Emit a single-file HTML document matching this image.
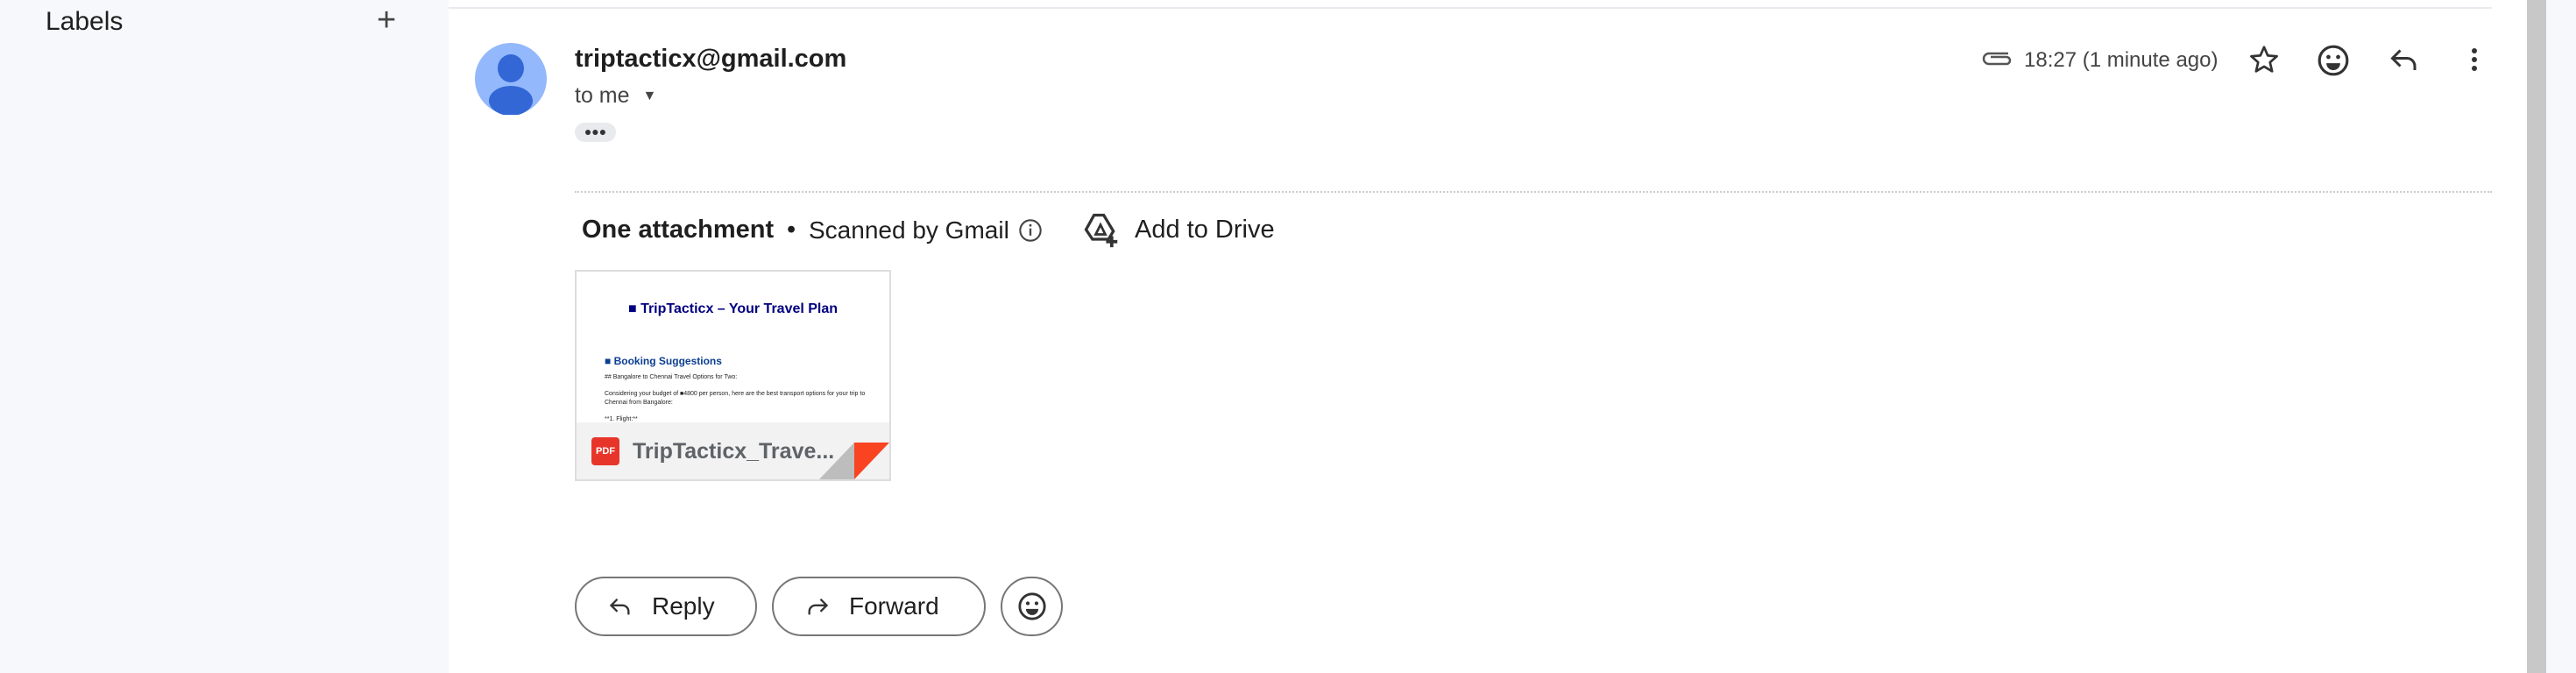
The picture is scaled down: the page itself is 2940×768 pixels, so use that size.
<!DOCTYPE html>
<html><head><meta charset="utf-8"><style>
*{margin:0;padding:0;box-sizing:border-box}
body{width:2940px;height:768px;overflow:hidden;background:#f6f8fc;font-family:"Liberation Sans",sans-serif;color:#1f1f1f;position:relative}
.abs{position:absolute}
.main{left:512px;top:0;width:2372px;height:768px;background:#fff}
.btn{position:absolute;top:658px;height:68px;border:2px solid #747775;border-radius:34px;display:flex;align-items:center;font-size:28px;color:#1f1f1f}
</style></head><body>
<div class="abs" style="left:52px;top:8px;font-size:30px;color:#1f1f1f">Labels</div>
<div class="abs" style="left:430px;top:2px;font-size:38px;color:#444">+</div>
<div class="abs main"></div>
<div class="abs" style="left:512px;top:8px;width:2332px;height:2px;background:#e8ebef"></div>
<div class="abs" style="left:2884px;top:0;width:22px;height:768px;background:#c8c8c8"></div>
<svg class="abs" style="left:542px;top:49px" width="82" height="82" viewBox="0 0 82 82"><circle cx="41" cy="41" r="41" fill="#93b8fb"/><ellipse cx="41" cy="29" rx="15" ry="16" fill="#3367d6"/><ellipse cx="41" cy="66" rx="25" ry="17" fill="#3367d6"/></svg>
<div class="abs" style="left:656px;top:51px;font-size:29px;font-weight:bold">triptacticx@gmail.com</div>
<div class="abs" style="left:656px;top:95px;font-size:25px;color:#444">to me <span style="font-size:16px;position:relative;top:-3px;margin-left:8px">▼</span></div>
<div class="abs" style="left:656px;top:140px;width:47px;height:22px;border-radius:11px;background:#e8eaed;font-size:14px;text-align:center;line-height:20px;color:#333;font-weight:bold">●●●</div>
<div class="abs" style="left:2262px;top:57px"><svg width="36" height="20" viewBox="0 0 36 20"><path d="M30 4H8a6 6 0 0 0 0 12h20a4 4 0 0 0 0-8H10" fill="none" stroke="#555" stroke-width="2.5"/></svg></div>
<div class="abs" style="left:2310px;top:55px;font-size:24px;color:#444">18:27 (1 minute ago)</div>
<svg class="abs" style="left:2566px;top:50px" width="36" height="36" viewBox="0 0 24 24"><path d="M12 2.5l2.8 6.4 6.9.6-5.2 4.6 1.6 6.8L12 17.3l-6.1 3.6 1.6-6.8-5.2-4.6 6.9-.6z" fill="none" stroke="#333" stroke-width="1.8" stroke-linejoin="round"/></svg>
<svg class="abs" style="left:2644px;top:50px" width="38" height="38" viewBox="0 0 24 24"><circle cx="12" cy="12" r="10" fill="none" stroke="#333" stroke-width="2"/><circle cx="8.5" cy="9.5" r="1.5" fill="#333"/><circle cx="15.5" cy="9.5" r="1.5" fill="#333"/><path d="M7 14h10a5 5 0 0 1-10 0z" fill="#333"/></svg>
<svg class="abs" style="left:2726px;top:50px" width="36" height="36" viewBox="0 0 24 24"><path d="M9 5L3 11l6 6M3 11h11a6 6 0 0 1 6 6v3" fill="none" stroke="#333" stroke-width="2"/></svg>
<svg class="abs" style="left:2812px;top:50px" width="24" height="36" viewBox="0 0 24 36"><circle cx="12" cy="8" r="3" fill="#333"/><circle cx="12" cy="18" r="3" fill="#333"/><circle cx="12" cy="28" r="3" fill="#333"/></svg>
<div class="abs" style="left:656px;top:218px;width:2188px;border-top:2px dotted #ccc"></div>
<div class="abs" style="left:664px;top:246px;font-size:29px;font-weight:bold">One attachment</div>
<div class="abs" style="left:898px;top:246px;font-size:29px">•</div>
<div class="abs" style="left:923px;top:247px;font-size:28px">Scanned by Gmail</div>
<svg class="abs" style="left:1162px;top:249px" width="28" height="28" viewBox="0 0 24 24"><circle cx="12" cy="12" r="10" fill="none" stroke="#444" stroke-width="1.8"/><path d="M12 10v7" stroke="#444" stroke-width="2"/><circle cx="12" cy="7" r="1.2" fill="#444"/></svg>
<svg class="abs" style="left:1234px;top:240px" width="44" height="44" viewBox="0 0 24 24"><path d="M8 3h6l6 10-3 5H7l-4-6z" fill="none" stroke="#333" stroke-width="1.8"/><path d="M9 15l3-6 3 6z" fill="none" stroke="#333" stroke-width="1.5"/><path d="M19 16v7M15.5 19.5h7" stroke="#333" stroke-width="2"/></svg>
<div class="abs" style="left:1295px;top:246px;font-size:29px">Add to Drive</div>
<div class="abs" style="left:656px;top:308px;width:361px;height:241px;border:2px solid #ddd;background:#fff;overflow:hidden">
 <div style="position:absolute;left:0;top:34px;width:100%;text-align:center;font-size:16px;font-weight:bold;color:#000080">■ TripTacticx – Your Travel Plan</div>
 <div style="position:absolute;left:32px;top:95px;font-size:12px;font-weight:bold;color:#0b3d91">■ Booking Suggestions</div>
 <div style="position:absolute;left:32px;top:117px;font-size:7px">## Bangalore to Chennai Travel Options for Two:</div>
 <div style="position:absolute;left:32px;top:135px;font-size:7px;width:300px;line-height:10px">Considering your budget of ■4800 per person, here are the best transport options for your trip to Chennai from Bangalore:</div>
 <div style="position:absolute;left:32px;top:165px;font-size:7px">**1. Flight:**</div>
 <div style="position:absolute;left:0;top:172px;width:100%;height:70px;background:#f2f2f2"></div>
 <div style="position:absolute;left:17px;top:189px;width:32px;height:32px;background:#e8352a;border-radius:4px;color:#fff;font-size:11px;font-weight:bold;text-align:center;line-height:32px">PDF</div>
 <div style="position:absolute;left:64px;top:191px;font-size:25px;font-weight:bold;color:#5f6368">TripTacticx_Trave...</div>
 <svg style="position:absolute;right:0;bottom:0" width="80" height="42" viewBox="0 0 80 42"><polygon points="40,0 80,0 40,42" fill="#fa4321"/><polygon points="40,0 40,42 0,42" fill="#bdbdbd"/></svg>
</div>
<div class="btn" style="left:656px;width:208px;padding-left:36px"><svg width="28" height="28" viewBox="0 0 24 24" style="margin-right:22px"><path d="M9 5L3 11l6 6M3 11h11a6 6 0 0 1 6 6v3" fill="none" stroke="#333" stroke-width="2"/></svg>Reply</div>
<div class="btn" style="left:881px;width:244px;padding-left:36px"><svg width="28" height="28" viewBox="0 0 24 24" style="margin-right:22px"><path d="M15 5l6 6-6 6M21 11H10a6 6 0 0 0-6 6v3" fill="none" stroke="#333" stroke-width="2"/></svg>Forward</div>
<div class="btn" style="left:1142px;width:71px;justify-content:center"><svg width="34" height="34" viewBox="0 0 24 24"><circle cx="12" cy="12" r="10" fill="none" stroke="#333" stroke-width="2"/><circle cx="8.5" cy="9.5" r="1.5" fill="#333"/><circle cx="15.5" cy="9.5" r="1.5" fill="#333"/><path d="M7 14h10a5 5 0 0 1-10 0z" fill="#333"/></svg></div>
</body></html>
